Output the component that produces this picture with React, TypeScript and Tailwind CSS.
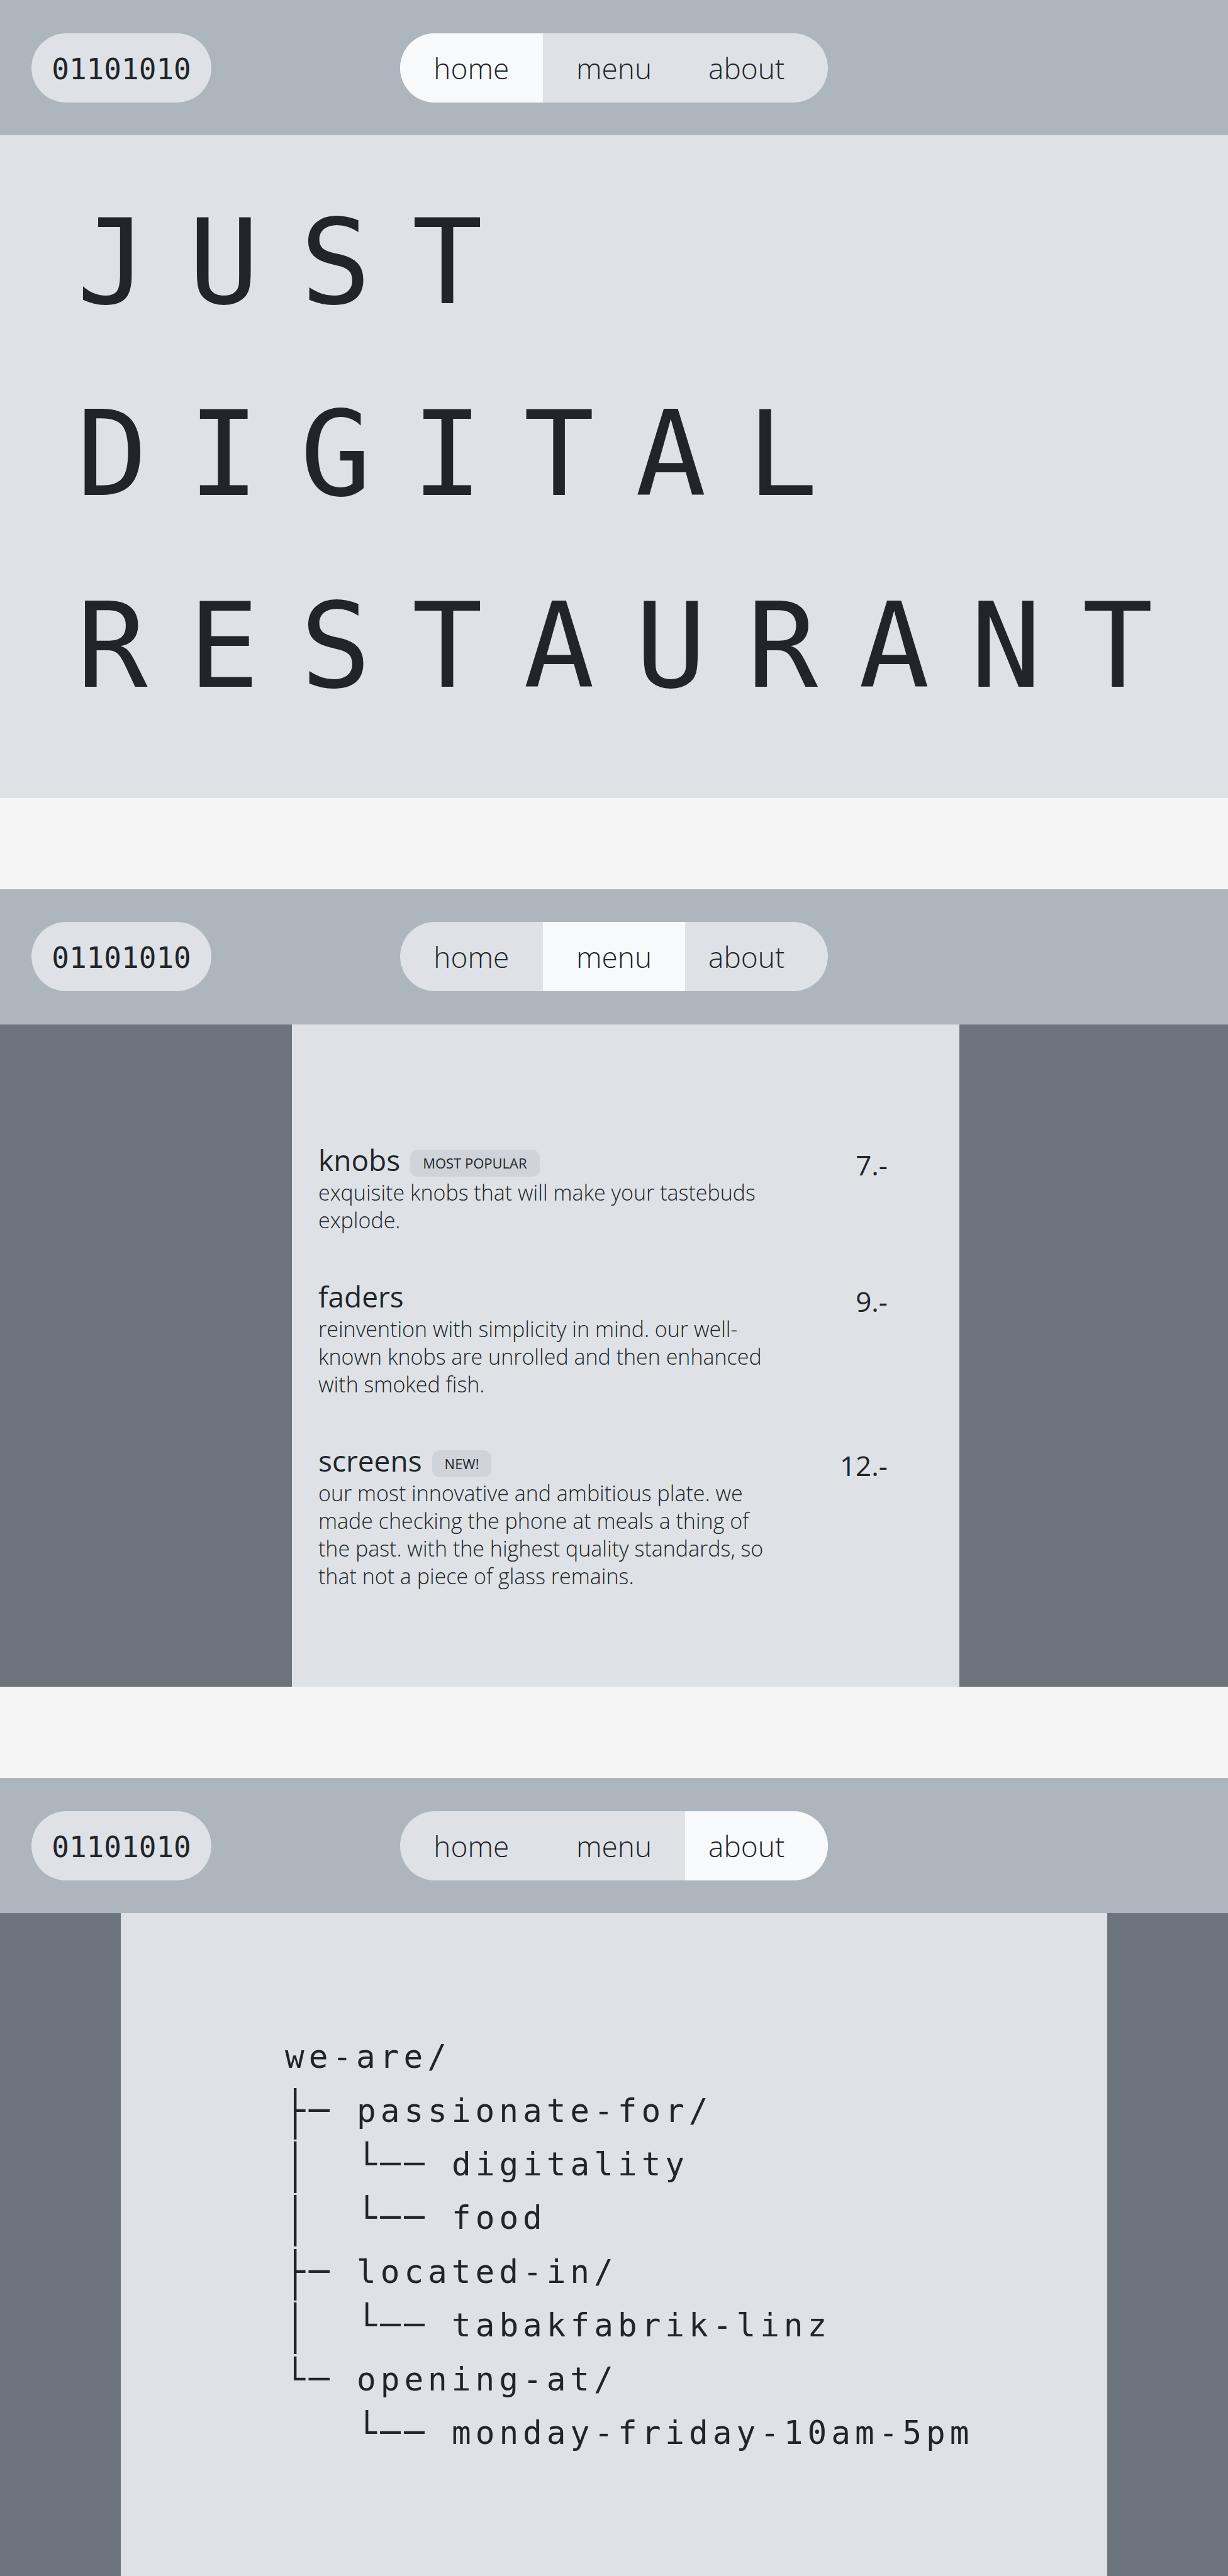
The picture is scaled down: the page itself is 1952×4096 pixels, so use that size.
type Page = "home" | "menu" | "about";

const sans = "font-['Open_Sans','Noto_Sans',sans-serif]";
const mono = "font-['DejaVu_Sans_Mono','Liberation_Mono',monospace]";

const tabs: { page: Page; className: string }[] = [
  { page: "home", className: "" },
  { page: "menu", className: "" },
  { page: "about", className: "pr-8" },
];

function Header({ current }: { current: Page }) {
  return (
    <header className="grid h-[215px] shrink-0 grid-cols-[1fr_680px_1fr] items-center bg-[#adb5bd] text-[#212529]">
      <a
        href="#home"
        className={`${mono} ml-[50px] flex h-[110px] w-[286px] items-center justify-center rounded-full bg-[#dee2e6] pt-1 text-[46px] leading-none`}
      >
        01101010
      </a>
      <nav
        aria-label="Main"
        className={`${sans} grid h-[110px] grid-cols-3 overflow-hidden rounded-full bg-[#dee2e6] text-[46px] leading-none font-light`}
      >
        {tabs.map(({ page, className }) => (
          <a
            key={page}
            href={`#${page}`}
            aria-current={page === current ? "page" : undefined}
            className={`flex items-center justify-center ${className} ${page === current ? "bg-[#f8f9fa]" : ""}`}
          >
            {page}
          </a>
        ))}
      </nav>
    </header>
  );
}

const dishes = [
  {
    name: "knobs",
    badge: "MOST POPULAR",
    text: "exquisite knobs that will make your tastebuds explode.",
    price: "7.-",
  },
  {
    name: "faders",
    text: "reinvention with simplicity in mind. our well-known knobs are unrolled and then enhanced with smoked fish.",
    price: "9.-",
  },
  {
    name: "screens",
    badge: "NEW!",
    text: "our most innovative and ambitious plate. we made checking the phone at meals a thing of the past. with the highest quality standards, so that not a piece of glass remains.",
    price: "12.-",
  },
];

function Menu() {
  return (
    <div className="grid grow grid-cols-[464fr_1061fr_427fr] bg-[#6c757d]">
      <ul
        className={`${sans} col-start-2 flex flex-col gap-[69px] bg-[#dee2e6] pt-[185px] pr-[114px] pb-16 pl-[42px] text-[#212529]`}
      >
        {dishes.map((dish) => (
          <li key={dish.name} className="flex items-start justify-between">
            <div className="w-[724px]">
              <div className="flex h-[60px] items-center gap-4">
                <h2 className="text-[46px] leading-[60px] font-medium">{dish.name}</h2>
                {dish.badge && (
                  <span className="mt-3 rounded-xl bg-[#ced4da] px-5 text-[22px] leading-[43px]">{dish.badge}</span>
                )}
              </div>
              <p className="text-[34px] leading-[44px] font-light">{dish.text}</p>
            </div>
            <span className="pt-2 text-[44px] leading-[60px] font-medium">{dish.price}</span>
          </li>
        ))}
      </ul>
    </div>
  );
}

type Row = { label: string; depth: 0 | 1 | 2; trunk?: "tee" | "line" | "end" };

const tree: Row[] = [
  { label: "we-are/", depth: 0 },
  { label: "passionate-for/", depth: 1, trunk: "tee" },
  { label: "digitality", depth: 2, trunk: "line" },
  { label: "food", depth: 2, trunk: "line" },
  { label: "located-in/", depth: 1, trunk: "tee" },
  { label: "tabakfabrik-linz", depth: 2, trunk: "line" },
  { label: "opening-at/", depth: 1, trunk: "end" },
  { label: "monday-friday-10am-5pm", depth: 2 },
];

function Branch({ row }: { row: Row }) {
  const width = row.depth === 1 ? 114 : 265;
  return (
    <svg
      aria-hidden="true"
      width={width}
      height="85"
      viewBox={`0 0 ${width} 85`}
      className="mt-1 shrink-0 overflow-visible"
      fill="currentColor"
    >
      {row.trunk && <rect x="14" y="2" width="4.4" height={row.trunk === "end" ? 38 : 82} />}
      {row.depth === 1 && (
        <>
          <rect x="14" y="35.8" width="18.6" height="4.2" />
          <rect x="37.5" y="35.8" width="33.5" height="4.2" />
        </>
      )}
      {row.depth === 2 && (
        <>
          <rect x="128" y="2" width="4.4" height="38" />
          <rect x="128" y="35.8" width="18.4" height="4.2" />
          <rect x="151" y="35.8" width="33" height="4.2" />
          <rect x="189" y="35.8" width="33" height="4.2" />
        </>
      )}
    </svg>
  );
}

function About() {
  return (
    <div className="grid grow grid-cols-[192fr_1568fr_192fr] bg-[#6c757d]">
      <div className="col-start-2 bg-[#dee2e6] pt-[186px] pb-16 pl-[261px] text-[#212529]">
        <ul className={`${mono} grid h-[683px] grid-rows-8 text-[51px] leading-[85px] tracking-[7px] whitespace-nowrap`}>
          {tree.map((row) => (
            <li key={row.label} className="flex min-h-0">
              {row.depth > 0 && <Branch row={row} />}
              <span>{row.label}</span>
            </li>
          ))}
        </ul>
      </div>
    </div>
  );
}

export default function App() {
  return (
    <main className="flex min-h-screen flex-col gap-[145px] bg-[#f5f5f5]">
      <section id="home" className="flex grow basis-0 flex-col">
        <Header current="home" />
        <div className="grow bg-[#dee2e6] pt-[50px] pb-16 pl-[122px] text-[#212529]">
          <h1 className={`${mono} text-[187px] leading-[305px] tracking-[65px] whitespace-nowrap`}>
            JUST
            <br />
            DIGITAL
            <br />
            RESTAURANT
          </h1>
        </div>
      </section>
      <section id="menu" className="flex grow basis-0 flex-col">
        <Header current="menu" />
        <Menu />
      </section>
      <section id="about" className="flex grow basis-0 flex-col">
        <Header current="about" />
        <About />
      </section>
    </main>
  );
}
